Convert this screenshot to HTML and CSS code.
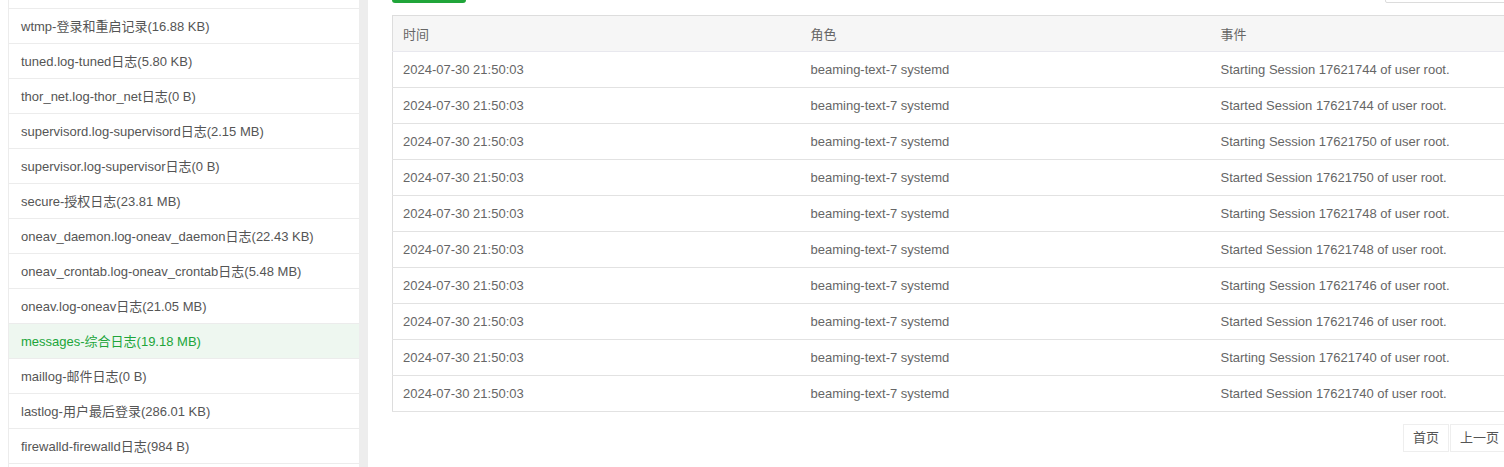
FILE: index.html
```html
<!DOCTYPE html>
<html lang="zh-CN">
<head>
    <meta charset="UTF-8">
    <meta name="viewport" content="width=device-width, initial-scale=1.0">
    <title>系统日志</title>
    <link rel="stylesheet" href="styles.css">
</head>
<body>
    <div class="page">
        <ul class="log-list" id="logList">
            <!-- log files are filled in by the script below -->
        </ul>
        <div class="gutter"></div>
        <div class="main">
            <div class="toolbar">
                <button class="btn-refresh">刷新日志</button>
                <input class="search" type="text" placeholder="">
            </div>
            <table class="log-table">
                <colgroup>
                    <col class="col-time">
                    <col class="col-role">
                    <col>
                </colgroup>
                <thead>
                    <tr><th>时间</th><th>角色</th><th>事件</th></tr>
                </thead>
                <tbody id="logRows"></tbody>
            </table>
            <div class="pager">
                <a class="page-btn">首页</a>
                <a class="page-btn">上一页</a>
                <a class="page-btn">下一页</a>
                <a class="page-btn">尾页</a>
            </div>
        </div>
    </div>

    <script>
        // log files in the sidebar
        const logFiles = [
            'yum.log-yum日志(12.40 KB)',
            'wtmp-登录和重启记录(16.88 KB)',
            'tuned.log-tuned日志(5.80 KB)',
            'thor_net.log-thor_net日志(0 B)',
            'supervisord.log-supervisord日志(2.15 MB)',
            'supervisor.log-supervisor日志(0 B)',
            'secure-授权日志(23.81 MB)',
            'oneav_daemon.log-oneav_daemon日志(22.43 KB)',
            'oneav_crontab.log-oneav_crontab日志(5.48 MB)',
            'oneav.log-oneav日志(21.05 MB)',
            'messages-综合日志(19.18 MB)',
            'maillog-邮件日志(0 B)',
            'lastlog-用户最后登录(286.01 KB)',
            'firewalld-firewalld日志(984 B)',
            'dmesg-内核缓冲区日志(0 B)'
        ];
        const activeLog = 'messages';

        const list = document.getElementById('logList');
        logFiles.forEach(name => {
            const li = document.createElement('li');
            li.className = 'log-item' + (name.startsWith(activeLog + '-') ? ' active' : '');
            li.textContent = name;
            list.appendChild(li);
        });

        // session events
        const sessions = [17621744, 17621750, 17621748, 17621746, 17621740];
        const rows = [];
        sessions.forEach(id => {
            rows.push('Starting Session ' + id + ' of user root.');
            rows.push('Started Session ' + id + ' of user root.');
        });

        document.getElementById('logRows').innerHTML = rows.map(event => `
            <tr>
                <td>2024-07-30 21:50:03</td>
                <td>beaming-text-7 systemd</td>
                <td>${event}</td>
            </tr>
        `).join('');
    </script>
</body>
</html>
```

FILE: styles.css
```css
body {
    margin: 0;
    background-color: #fff;
    font-family: "Liberation Sans", "Noto Sans CJK SC", sans-serif;
    font-size: 13px;
    overflow: hidden;
}

/* the page is shown scrolled down a little */
.page {
    display: flex;
    align-items: flex-start;
    margin-top: -27px;
    padding-left: 8px;
}

.log-list {
    flex: none;
    width: 350px;
    margin: 1px 0 0;
    padding: 0;
    list-style: none;
    border-left: 1px solid #ececec;
}

.log-item {
    height: 34px;
    line-height: 35px;
    padding-left: 12px;
    color: #555;
    border-bottom: 1px solid #ececec;
    white-space: nowrap;
}

.log-item.active {
    background-color: #eef7f0;
    color: #20a53a;
}

.gutter {
    flex: none;
    width: 9px;
    align-self: stretch;
    min-height: 600px;
    background-color: #ededed;
}

.main {
    flex: none;
    width: 1228px;
    padding-left: 24px;
}

.toolbar {
    display: flex;
    justify-content: space-between;
    margin-bottom: 12px;
}

.btn-refresh {
    width: 74px;
    height: 30px;
    border: none;
    border-radius: 3px;
    background-color: #20a53a;
    color: #fff;
    font-family: inherit;
    font-size: 13px;
}

.search {
    width: 233px;
    height: 28px;
    padding: 0;
    border: 1px solid #dcdcdc;
    border-radius: 2px;
}

.log-table {
    width: 100%;
    table-layout: fixed;
    border-collapse: collapse;
    border: 1px solid #ddd;
    color: #666;
}

.col-time {
    width: 408px;
}

.col-role {
    width: 410px;
}

.log-table th,
.log-table td {
    height: 35px;
    padding: 0 10px;
    text-align: left;
    font-weight: normal;
    border-bottom: 1px solid #e2e2e2;
    white-space: nowrap;
}

.log-table th {
    background-color: #f6f6f6;
    border-bottom-color: #e8e8ee;
}

.pager {
    display: flex;
    gap: 1px;
    margin-top: 12px;
    padding-left: 1011px;
}

.page-btn {
    height: 26px;
    line-height: 26px;
    padding: 0 9px;
    border: 1px solid #eee;
    color: #555;
    white-space: nowrap;
}
```
